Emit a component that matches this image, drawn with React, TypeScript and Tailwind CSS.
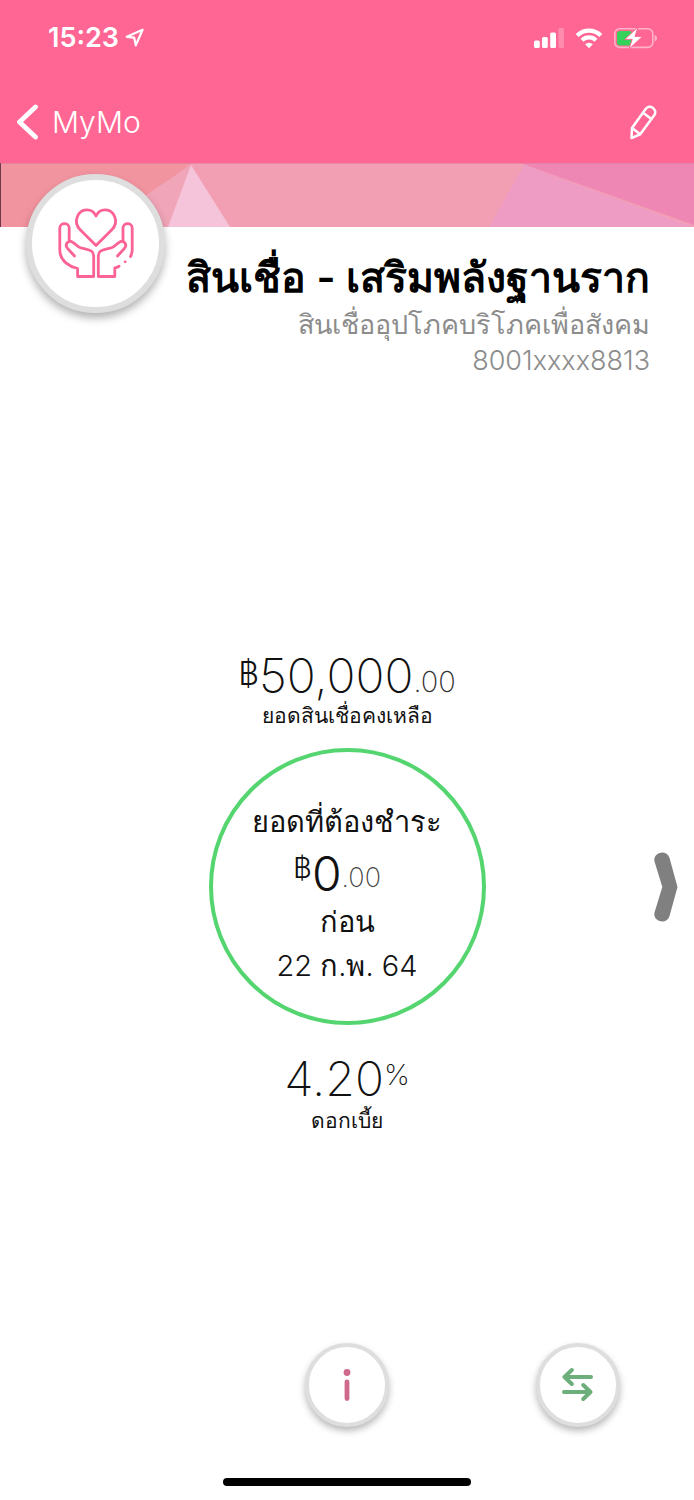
import { ReactNode } from "react";

const StatusBar = () => {
    return(
        <div className="flex items-center justify-between h-19 pl-12 pr-9 text-white">
            <div className="flex items-center gap-1.5">
                <span className="text-[27px] leading-8 font-semibold">15:23</span>
                <svg className="w-5 h-5" viewBox="0 0 20 20" fill="none" stroke="currentColor" strokeWidth="2.2" strokeLinejoin="round" aria-hidden="true">
                    <path d="M17.6 1.8 1.8 8.8l7.4.9 1.6 7.6z" />
                </svg>
            </div>
            <div className="flex items-center gap-2.5">
                <svg className="w-8 h-6" viewBox="0 0 32 24" fill="currentColor" aria-hidden="true">
                    <rect x="0" y="14.5" width="5.8" height="7.5" rx="1.5" />
                    <rect x="8" y="11" width="5.8" height="11" rx="1.5" />
                    <rect x="16.2" y="6.5" width="5.8" height="15.5" rx="1.5" />
                    <rect x="24.5" y="2" width="5.5" height="20" rx="1.5" opacity="0.25" />
                </svg>
                <svg className="w-7 h-6" viewBox="0 0 28 24" fill="none" stroke="currentColor" strokeWidth="4.2" aria-hidden="true">
                    <path d="M1.2 9.6a16.6 16.6 0 0 1 23.6 0" />
                    <path d="M6 14.2a10 10 0 0 1 14 0" />
                    <path d="M13 22.2l-3.9-3.9a5.6 5.6 0 0 1 7.8 0z" fill="currentColor" stroke="none" />
                </svg>
                <svg className="w-11 h-6" viewBox="0 0 44 24" aria-hidden="true">
                    <rect x="0.8" y="2.8" width="38" height="18.6" rx="5" fill="none" stroke="#fff" strokeOpacity="0.5" strokeWidth="1.6" />
                    <path d="M40.6 9v6.4c1.6-.6 2.4-1.8 2.4-3.2s-.8-2.6-2.4-3.2z" fill="#fff" fillOpacity="0.5" />
                    <rect x="3" y="5" width="15" height="14.4" rx="3" fill="#34d15b" />
                    <path d="M24 1 10.8 13.4h7.4L14.8 23.3 28.5 10.4H21z" fill="#fff" stroke="#ff6694" strokeWidth="1" strokeLinejoin="round" />
                </svg>
            </div>
        </div>
    )
}

const Banner = () => {
    return(
        <svg className="block w-full h-16" viewBox="0 0 694 64" preserveAspectRatio="none" aria-hidden="true">
            <rect width="694" height="64" fill="#f39fb3" />
            <path d="M0 0H191L110 64H0z" fill="#f2949f" />
            <path d="M191 2 110 56V64H170z" fill="#f1a5b8" />
            <path d="M191 2 168 64H230z" fill="#f6c4da" />
            <path d="M524 2 489 64H694z" fill="#ef9cc4" />
            <path d="M520 0H694V62z" fill="#ef87b5" />
            <rect width="694" height="1" fill="#d9789a" fillOpacity="0.5" />
            <rect width="1" height="64" fill="#6d3a4a" />
        </svg>
    )
}

const HandsIcon = () => {
    return(
        <svg className="w-20 h-20" viewBox="0 0 80 80" fill="none" stroke="#fb6394" strokeWidth="2.8" strokeLinecap="round" strokeLinejoin="round" aria-hidden="true">
            <path d="M40 43.5 24.4 28c-3.8-3.8-5-8.8-3-13.5C24.8 6.3 36 5.3 40 14c4-8.7 15.2-7.7 18.6.5 2 4.7.8 9.7-3 13.5z" />
            <path d="M18.5 54 11.6 46.5c-3.6-4.5 1.4-9.7 5.6-5.8l5.5 4.1c3.3 2.3 9.3 2 12.8 4.4 1.9 1.3 2.2 3.3 2.2 6V74.5H21.6V66.5c-7.6-1.8-17.8-7.2-17.8-18.5V26c0-5.8 9.4-5.8 9.4 0v12.5" />
            <path d="M61.5 54 68.4 46.5c3.6-4.500-1.4-9.700-5.6-5.800l-5.5 4.1c-3.3 2.3-9.3 2-12.8 4.4-1.9 1.3-2.2 3.3-2.2 6V74.5H58.8V66c1.6-.3 3-1 4.3-1.8" />
            <path d="M67 38.5V26c0-5.8 9.2-5.8 9.2 0v22c0 2.3-.6 4.5-1.7 6.5" />
            <circle cx="69.2" cy="59.8" r="1.4" fill="#fb6394" stroke="none" />
        </svg>
    )
}

type RoundButtonProps = {
    label: string;
    children: ReactNode;
}

const RoundButton = ({ label, children }: RoundButtonProps) => {
    return(
        <button
            type="button"
            aria-label={label}
            className="flex items-center justify-center w-21 h-21 bg-white border-4 border-[#dedede] rounded-full shadow-[0_4px_7px_rgba(0,0,0,0.28)]">
            {children}
        </button>
    )
}

export default function App() {
    return(
        <div className="flex flex-col min-h-screen bg-white font-['Inter',sans-serif]">
            <header className="bg-[#ff6694]">
                <StatusBar />
                <nav className="flex items-center justify-between h-[87px] pl-4 pr-9 pt-1 text-white">
                    <a href="#" className="flex items-center gap-3 text-[30px] leading-9 font-light">
                        <svg className="w-6 h-9" viewBox="0 0 24 36" fill="none" stroke="currentColor" strokeWidth="4.8" strokeLinecap="round" strokeLinejoin="round" aria-hidden="true">
                            <path d="M19.5 3 3.5 18l16 15" />
                        </svg>
                        MyMo
                    </a>
                    <button type="button" aria-label="Edit">
                        <svg className="w-7 h-9" viewBox="0 0 28 36" fill="none" stroke="currentColor" strokeWidth="2.5" strokeLinejoin="round" aria-hidden="true">
                            <path d="M1.5 34 2 24 15.6 5.1c1.8-2.8 5-3 7.4-1.2s3.2 4.8 1.2 7.4L10.2 30.3z" />
                            <path d="M2 24 10.2 30.3M13 8.7l8.4 6.2" />
                        </svg>
                    </button>
                </nav>
            </header>

            <section className="relative">
                <Banner />
                <div className="absolute top-[11px] left-[26px] flex items-center justify-center w-[139px] h-[139px] pb-1 bg-white border-[6px] border-[#dedede] rounded-full shadow-[0_5px_8px_rgba(0,0,0,0.3)]">
                    <HandsIcon />
                </div>
                <div className="pt-6 pr-11 text-right">
                    <h1 className="mb-1 text-[41px] leading-[52px] font-semibold text-black">สินเชื่อ - เสริมพลังฐานราก</h1>
                    <p className="text-[27px] leading-9 font-light text-[#8c8c8c]">สินเชื่ออุปโภคบริโภคเพื่อสังคม</p>
                    <p className="text-[27px] leading-9 font-light text-[#8c8c8c]">8001xxxx8813</p>
                </div>
            </section>

            <main className="relative flex flex-col items-center grow pt-[271px] text-[#111]">
                <p className="flex items-start text-[48px] leading-[52px] font-extralight">
                    <span className="text-[32px] leading-12 font-light">฿</span>
                    50,000
                    <span className="self-end text-[29px] leading-10 text-[#333]">.00</span>
                </p>
                <p className="text-[21px] leading-7">ยอดสินเชื่อคงเหลือ</p>

                <div className="flex flex-col items-center w-[277px] h-[277px] mt-[18px] pt-12 border-4 border-[#55d56f] rounded-full">
                    <p className="text-[29px] leading-11">ยอดที่ต้องชำระ</p>
                    <p className="flex items-start h-14 pr-5 text-[48px] leading-[60px] font-light">
                        <span className="text-[29px] leading-12">฿</span>
                        0
                        <span className="self-end text-[27px] leading-11 font-extralight text-[#444]">.00</span>
                    </p>
                    <p className="text-[29px] leading-11">ก่อน</p>
                    <p className="text-[29px] leading-11 font-light">22 ก.พ. 64</p>
                </div>

                <p className="flex items-start mt-7 text-[48px] leading-[52px] font-extralight">
                    4.20
                    <span className="text-[29px] leading-11">%</span>
                </p>
                <p className="text-[21px] leading-8">ดอกเบี้ย</p>

                <button type="button" aria-label="Next" className="absolute top-[473px] right-4">
                    <svg className="w-6 h-[70px]" viewBox="0 0 24 70" fill="#808080" aria-hidden="true">
                        <path d="M.5 9.5C-1.5 1 12-3.5 15.4 5.5L23.5 35 15.4 64.5C12 73.5-1.5 69 .5 60.5L8.3 35z" />
                    </svg>
                </button>
            </main>

            <footer className="flex flex-col items-center gap-[51px] pb-[14px]">
                <div className="grid grid-cols-3 justify-items-center w-full">
                    <div className="col-start-2">
                        <RoundButton label="Information">
                            <svg className="w-8 h-8" viewBox="0 0 32 32" fill="#cf6a8c" aria-hidden="true">
                                <circle cx="16" cy="3.5" r="3.4" />
                                <rect x="13.6" y="10.5" width="4.8" height="21.5" rx="2.4" />
                            </svg>
                        </RoundButton>
                    </div>
                    <RoundButton label="Transfer">
                        <svg className="w-8 h-9" viewBox="0 0 32 36" fill="none" stroke="#6caf7b" strokeWidth="4" strokeLinecap="round" strokeLinejoin="round" aria-hidden="true">
                            <path d="M29 10H2.5M9.8 3 2.5 10l7.3 7" />
                            <path d="M2 25H28.5M21.2 18l7.3 7-7.3 7" />
                        </svg>
                    </RoundButton>
                </div>
                <div className="w-[248px] h-2 bg-black rounded-full"></div>
            </footer>
        </div>
    )
}
